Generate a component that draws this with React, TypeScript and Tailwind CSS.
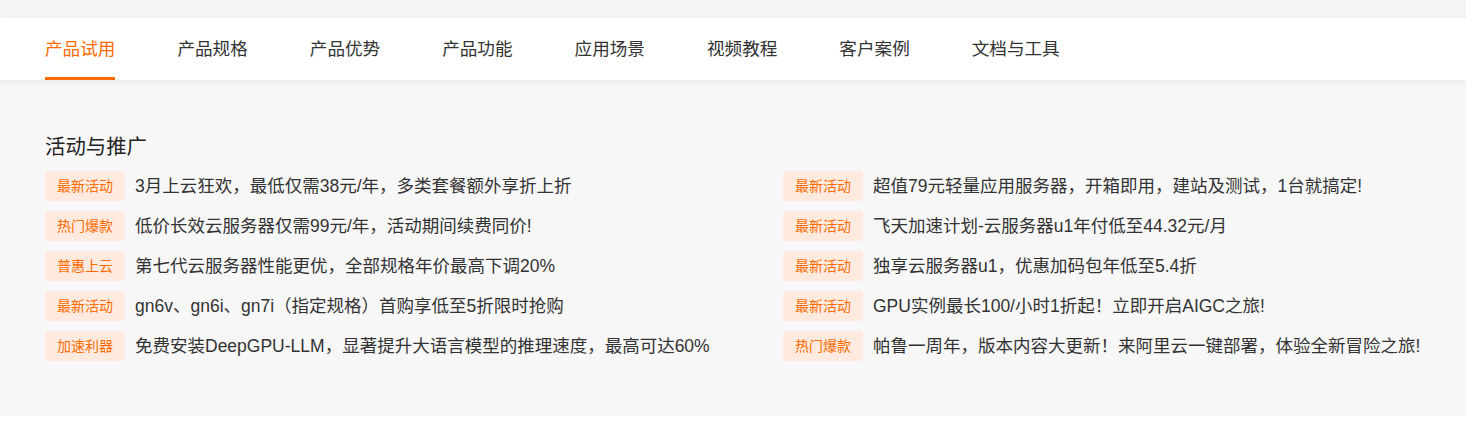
import { useState } from "react";

const tabs = [
  "产品试用",
  "产品规格",
  "产品优势",
  "产品功能",
  "应用场景",
  "视频教程",
  "客户案例",
  "文档与工具",
];

// left column, then right column
const leftItems = [
  { tag: "最新活动", text: "3月上云狂欢，最低仅需38元/年，多类套餐额外享折上折" },
  { tag: "热门爆款", text: "低价长效云服务器仅需99元/年，活动期间续费同价!" },
  { tag: "普惠上云", text: "第七代云服务器性能更优，全部规格年价最高下调20%" },
  { tag: "最新活动", text: "gn6v、gn6i、gn7i（指定规格）首购享低至5折限时抢购" },
  { tag: "加速利器", text: "免费安装DeepGPU-LLM，显著提升大语言模型的推理速度，最高可达60%" },
];

const rightItems = [
  { tag: "最新活动", text: "超值79元轻量应用服务器，开箱即用，建站及测试，1台就搞定!" },
  { tag: "最新活动", text: "飞天加速计划-云服务器u1年付低至44.32元/月" },
  { tag: "最新活动", text: "独享云服务器u1，优惠加码包年低至5.4折" },
  { tag: "最新活动", text: "GPU实例最长100/小时1折起！立即开启AIGC之旅!" },
  { tag: "热门爆款", text: "帕鲁一周年，版本内容大更新！来阿里云一键部署，体验全新冒险之旅!" },
];

const PromoRow = ({ tag, text }: { tag: string; text: string }) => (
  <div className="flex items-center h-[30px] gap-[10px]">
    <span className="w-[80px] h-[30px] shrink-0 flex items-center justify-center rounded-[2px] bg-[#ffeadf] text-[#ff6a00] text-[14px]">
      {tag}
    </span>
    <span className="text-[17.5px] text-[#333] whitespace-nowrap">{text}</span>
  </div>
);

export default function App() {
  const [active, setActive] = useState(0);

  return (
    <div
      className="w-[1466px] h-[435px] bg-white overflow-hidden"
      style={{ fontFamily: '"Liberation Sans", "Noto Sans CJK SC", sans-serif' }}
    >
      {/* top strip */}
      <div className="h-[18px] bg-[#f4f4f6]" />

      {/* tab bar */}
      <nav className="relative z-10 h-[62px] bg-white shadow-[0_2px_6px_rgba(0,0,0,0.06)]">
        <div className="flex h-full pl-[45px] gap-[62px]">
          {tabs.map((t, i) => (
            <button
              key={t}
              onClick={() => setActive(i)}
              className={
                i === active
                  ? "h-full flex items-center pt-[4px] border-b-[3px] border-[#ff6a00] text-[#ff6a00] text-[17.6px]"
                  : "h-full flex items-center pt-[4px] border-b-[3px] border-transparent text-[#333] text-[17.6px]"
              }
            >
              {t}
            </button>
          ))}
        </div>
      </nav>

      {/* promotions */}
      <section className="bg-[#f7f7f7] h-[336px] pt-[53px] pl-[45px]">
        <h2 className="text-[20.4px] leading-[28px] text-[#222]">活动与推广</h2>
        <div className="grid grid-cols-[738px_1fr] mt-[10px]">
          <div className="flex flex-col gap-[10px]">
            {leftItems.map((it, i) => (
              <PromoRow key={i} {...it} />
            ))}
          </div>
          <div className="flex flex-col gap-[10px]">
            {rightItems.map((it, i) => (
              <PromoRow key={i} {...it} />
            ))}
          </div>
        </div>
      </section>
    </div>
  );
}
